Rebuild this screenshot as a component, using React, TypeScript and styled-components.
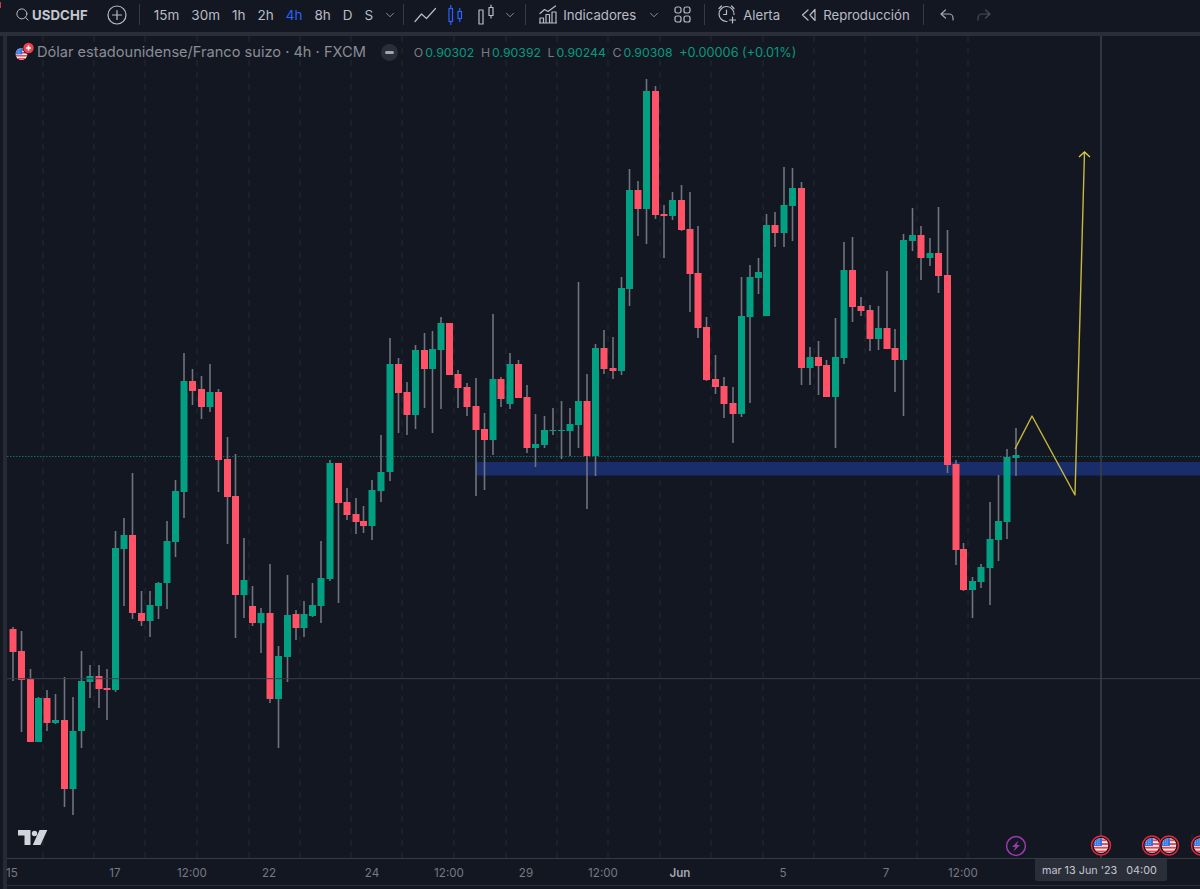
import { FC } from "react";
import styled, { createGlobalStyle } from "styled-components";
import { Search, ChevronDown } from "lucide-react";

const GlobalStyle = createGlobalStyle`
  html, body {
    margin: 0;
    padding: 0;
    background: #131722;
  }
  body {
    font-family: Inter, "Noto Sans", "Liberation Sans", sans-serif;
    overflow: hidden;
  }
`;

const GREEN = "#02a082";
const RED = "#ff5266";

// x, wick top, wick bottom, body top, body bottom, up
type Candle = [number, number, number, number, number, boolean];

const candles: Candle[] = [
  [13, 627, 681, 629, 652, false],
  [21.5, 631, 732, 651, 680, false],
  [30.5, 669, 742, 679, 742, false],
  [38.5, 697, 742, 698, 742, true],
  [47, 690, 731, 698, 723, false],
  [55.5, 694, 724, 720, 723, true],
  [64.5, 677, 807, 720, 789, false],
  [73, 697, 815, 731, 789, true],
  [81.5, 651, 748, 681, 731, true],
  [90, 665, 698, 676, 682, true],
  [99, 665, 708, 676, 689, false],
  [107, 669, 720, 688, 690, false],
  [115.5, 531, 692, 548, 690, true],
  [124, 518, 606, 535, 549, true],
  [132.5, 473, 619, 535, 613, false],
  [141.5, 591, 626, 613, 621, false],
  [150, 591, 637, 605, 621, true],
  [158.5, 582, 619, 583, 606, true],
  [167, 521, 609, 541, 583, true],
  [175.5, 480, 557, 491, 542, true],
  [184, 353, 518, 381, 492, true],
  [192.5, 369, 405, 381, 391, false],
  [201.5, 376, 419, 389, 407, false],
  [210, 364, 412, 392, 407, true],
  [218.5, 389, 492, 392, 460, false],
  [227.5, 437, 544, 459, 497, false],
  [235.5, 454, 638, 496, 595, false],
  [244, 538, 618, 580, 595, true],
  [252.5, 586, 626, 606, 623, false],
  [261, 608, 653, 613, 623, true],
  [270, 564, 703, 613, 699, false],
  [278.5, 646, 748, 656, 699, true],
  [287.5, 575, 682, 615, 657, true],
  [296, 610, 640, 614, 628, false],
  [304, 601, 637, 614, 628, true],
  [312.5, 583, 617, 605, 616, true],
  [321, 541, 623, 578, 606, true],
  [330, 460, 581, 463, 579, true],
  [338.5, 463, 603, 463, 503, false],
  [347, 488, 520, 502, 515, false],
  [356, 498, 534, 514, 522, false],
  [363.5, 506, 533, 521, 526, false],
  [372, 480, 540, 490, 526, true],
  [381, 435, 502, 472, 491, true],
  [390, 338, 481, 364, 472, true],
  [398.5, 358, 433, 364, 393, false],
  [407, 382, 435, 392, 415, false],
  [415.5, 345, 429, 350, 415, true],
  [424.5, 333, 408, 350, 369, false],
  [432.5, 331, 433, 349, 369, true],
  [441, 317, 409, 323, 350, true],
  [449.5, 323, 375, 323, 375, false],
  [458, 370, 408, 374, 388, false],
  [467, 383, 416, 387, 407, false],
  [476, 378, 496, 406, 430, false],
  [484.5, 413, 490, 429, 440, false],
  [493, 314, 455, 379, 440, true],
  [501, 377, 407, 379, 399, false],
  [510, 353, 409, 364, 404, true],
  [518.5, 360, 398, 364, 398, false],
  [527, 385, 453, 397, 448, false],
  [535.5, 414, 467, 444, 448, true],
  [544.5, 416, 448, 430, 445, true],
  [553, 408, 435, 430, 431, true],
  [561.5, 401, 459, 430, 431, true],
  [570, 408, 456, 424, 431, true],
  [578.5, 282, 448, 401, 425, true],
  [587, 374, 509, 401, 456, false],
  [595.5, 344, 476, 348, 456, true],
  [604, 330, 374, 348, 369, false],
  [613, 337, 379, 368, 371, false],
  [621.5, 277, 375, 288, 371, true],
  [629.5, 169, 306, 190, 289, true],
  [638, 181, 236, 190, 209, false],
  [646.5, 79, 244, 91, 209, true],
  [655.5, 86, 219, 91, 215, false],
  [664, 205, 258, 214, 216, false],
  [672.5, 192, 220, 200, 216, true],
  [681.5, 185, 231, 200, 230, false],
  [690, 192, 312, 229, 274, false],
  [698, 226, 338, 273, 328, false],
  [706.5, 317, 381, 327, 380, false],
  [715.5, 355, 394, 379, 387, false],
  [724, 377, 418, 386, 404, false],
  [733, 387, 443, 403, 414, false],
  [741.5, 277, 417, 316, 414, true],
  [750, 265, 403, 277, 317, true],
  [758.5, 258, 294, 272, 278, true],
  [766.5, 214, 316, 225, 316, true],
  [775, 212, 247, 225, 233, false],
  [784, 167, 247, 205, 233, true],
  [792.5, 168, 241, 188, 206, true],
  [801.5, 182, 385, 188, 368, false],
  [810, 347, 385, 357, 368, true],
  [818.5, 341, 395, 357, 366, false],
  [826.5, 360, 397, 365, 397, false],
  [835.5, 318, 448, 357, 397, true],
  [844, 242, 364, 270, 358, true],
  [852.5, 237, 322, 270, 307, false],
  [861, 297, 316, 306, 311, false],
  [870, 305, 351, 310, 339, false],
  [878.5, 306, 350, 328, 339, true],
  [887, 271, 349, 328, 349, false],
  [895, 329, 392, 348, 360, false],
  [903.5, 234, 416, 240, 360, true],
  [912.5, 208, 251, 235, 241, true],
  [921, 226, 280, 235, 258, false],
  [930, 238, 266, 253, 258, true],
  [938.5, 207, 293, 253, 276, false],
  [947.5, 230, 473, 275, 465, false],
  [956, 460, 565, 464, 550, false],
  [963.5, 543, 591, 549, 590, false],
  [972.5, 577, 618, 581, 590, true],
  [981, 564, 588, 567, 582, true],
  [990, 502, 605, 539, 568, true],
  [998.5, 475, 561, 521, 540, true],
  [1007, 449, 539, 457, 522, true],
  [1016, 428, 476, 455, 458, true],
];

const gridLines = [43, 94, 145, 197, 249, 300, 351, 402, 454, 506, 557, 608, 660, 711, 763, 814, 865, 917, 968];

const axisLabels: { x: number; text: string; strong?: boolean }[] = [
  { x: 12, text: "15" },
  { x: 115, text: "17" },
  { x: 192, text: "12:00" },
  { x: 269, text: "22" },
  { x: 372, text: "24" },
  { x: 449, text: "12:00" },
  { x: 526, text: "29" },
  { x: 603, text: "12:00" },
  { x: 680, text: "Jun", strong: true },
  { x: 783, text: "5" },
  { x: 886, text: "7" },
  { x: 963, text: "12:00" },
];

const intervals = ["15m", "30m", "1h", "2h", "4h", "8h", "D", "S"];

const Page = styled.div`
  width: 1200px;
  height: 889px;
  display: flex;
  flex-direction: column;
  background: #131722;
  overflow: hidden;
`;

const Toolbar = styled.div`
  height: 32px;
  flex: none;
  display: flex;
  align-items: center;
  padding: 0 0 3px 15px;
  color: #b9bcc5;
  font-size: 13.2px;
  box-sizing: border-box;
  position: relative;
  &::before {
    content: "";
    position: absolute;
    left: 0;
    top: 2px;
    width: 1px;
    height: 6px;
    background: #c73a48;
  }
`;

const Symbol = styled.span`
  margin-left: 2px;
  font-weight: 700;
  font-size: 13.2px;
  letter-spacing: 0.1px;
  color: #c4c7cf;
`;

const Divider = styled.div<{ $left: number; $right: number }>`
  width: 1px;
  height: 21px;
  flex: none;
  background: #363a45;
  margin-left: ${(p) => p.$left}px;
  margin-right: ${(p) => p.$right}px;
`;

const Intervals = styled.div`
  display: flex;
  gap: 12px;
  font-size: 13.5px;
`;

const Interval = styled.span<{ $active?: boolean }>`
  color: ${(p) => (p.$active ? "#2962ff" : "#b9bcc5")};
`;

const ToolIcon = styled.svg<{ $left?: number }>`
  display: block;
  flex: none;
  margin-left: ${(p) => p.$left ?? 0}px;
`;

const Chevron = styled(ChevronDown)<{ $left: number }>`
  flex: none;
  margin-left: ${(p) => p.$left}px;
  color: #a3a6af;
`;

const ToolLabel = styled.span<{ $left: number }>`
  margin-left: ${(p) => p.$left}px;
`;

const Gutter = styled.div`
  height: 4px;
  flex: none;
  background: #2a2e39;
`;

const Workspace = styled.div`
  flex: 1;
  display: flex;
  min-height: 0;
`;

const SideEdge = styled.div`
  width: 4px;
  margin-left: 3px;
  flex: none;
  background: #262a34;
`;

const Main = styled.div`
  flex: 1;
  display: flex;
  flex-direction: column;
  min-width: 0;
  position: relative;
`;

const Chart = styled.svg`
  display: block;
  flex: none;
  width: 1193px;
  height: 822px;
  border-bottom: 1px solid #363a45;
  box-sizing: content-box;
`;

const Legend = styled.div`
  position: absolute;
  left: 8px;
  top: 6px;
  display: flex;
  align-items: center;
  height: 20px;
`;

const LegendTitle = styled.span`
  margin-left: 3px;
  font-size: 14.6px;
  color: #8a8d96;
  white-space: nowrap;
`;

const CollapseButton = styled.span`
  width: 17px;
  height: 17px;
  margin-left: 15px;
  border-radius: 50%;
  background: #2a2e39;
  display: flex;
  align-items: center;
  justify-content: center;
  &::before {
    content: "";
    width: 9px;
    height: 3px;
    border-radius: 2px;
    background: #a3a6af;
  }
`;

const Values = styled.div`
  display: flex;
  margin-left: 16px;
  font-size: 12.3px;
  white-space: nowrap;
`;

const ValueKey = styled.span`
  color: #787b86;
  margin-right: 2px;
`;

const ValueNum = styled.span`
  color: #089981;
  margin-right: 6.5px;
`;

const ChangeValue = styled(ValueNum)`
  font-size: 12.7px;
`;

const TimeAxis = styled.div`
  height: 26px;
  flex: none;
  position: relative;
  border-bottom: 1px solid #2a2e39;
`;

const AxisLabel = styled.span<{ $strong?: boolean }>`
  position: absolute;
  top: 7px;
  transform: translateX(-50%);
  font-size: 11.6px;
  line-height: 14px;
  font-weight: ${(p) => (p.$strong ? 600 : 400)};
  color: ${(p) => (p.$strong ? "#a3a6af" : "#767983")};
`;

const TimeTip = styled.div`
  position: absolute;
  left: 1028px;
  top: 0;
  width: 125px;
  height: 22px;
  padding-left: 7px;
  background: #2a2e39;
  border-radius: 0 0 2px 2px;
  color: #c4c7cf;
  font-size: 10.8px;
  line-height: 24px;
  white-space: pre;
`;

const IconStroke = {
  fill: "none",
  stroke: "currentColor",
  strokeWidth: 1.2,
  strokeLinecap: "round" as const,
  strokeLinejoin: "round" as const,
};

const PlusCircle: FC = () => (
  <ToolIcon $left={19} width="20" height="20" viewBox="0 0 20 20" {...IconStroke}>
    <circle cx="10" cy="10" r="9" />
    <path d="M10 5.5v9M5.5 10h9" />
  </ToolIcon>
);

const LineIcon: FC = () => (
  <ToolIcon width="22" height="16" viewBox="0 0 22 16" {...IconStroke}>
    <path d="M1 14.5 7.5 7l5 4.5L21.5 1.5" />
  </ToolIcon>
);

const CandleIcon: FC = () => (
  <ToolIcon $left={12} width="15" height="22" viewBox="0 0 15 22" fill="none" stroke="#2962ff" strokeWidth={1.2}>
    <rect x="1" y="4.5" width="3.5" height="13" />
    <path d="M2.75 1v3.5M2.75 17.5V21" />
    <rect x="10" y="7.5" width="3.5" height="7" />
    <path d="M11.75 4v3.5M11.75 14.5V18" />
  </ToolIcon>
);

const HollowIcon: FC = () => (
  <ToolIcon $left={15} width="17" height="22" viewBox="0 0 17 22" {...IconStroke}>
    <rect x="1" y="6" width="4" height="14" />
    <rect x="11" y="3.5" width="4" height="8" />
    <path d="M13 1v2.5M13 11.5V14" />
  </ToolIcon>
);

const IndicatorsIcon: FC = () => (
  <ToolIcon width="18" height="19" viewBox="0 0 18 19" {...IconStroke}>
    <path d="M1 8.5 5.5 4.5 9 6.5 16.5 1" />
    <path d="M1 18v-5h3.5v5M7 18V9.5h3.5V18M13 18V7h4v11M0.5 18h17" />
  </ToolIcon>
);

const LayoutIcon: FC = () => (
  <ToolIcon $left={13} width="17" height="17" viewBox="0 0 17 17" {...IconStroke}>
    <rect x="1" y="1" width="6" height="6" rx="2" />
    <rect x="10" y="1" width="6" height="6" rx="2" />
    <rect x="1" y="10" width="6" height="6" rx="2" />
    <rect x="10" y="10" width="6" height="6" rx="2" />
  </ToolIcon>
);

const AlarmIcon: FC = () => (
  <ToolIcon width="19" height="19" viewBox="0 0 19 19" {...IconStroke}>
    <path d="M16 9.5A7.5 7.5 0 1 0 9 16.5" />
    <path d="M8.5 5v4.5H5.5M1 3.5 3.5 1M16 3.5 13.5 1M14.5 12v6M11.5 15h6" />
  </ToolIcon>
);

const ReplayIcon: FC = () => (
  <ToolIcon $left={21} width="17" height="14" viewBox="0 0 17 14" {...IconStroke}>
    <path d="M7 2 1.5 7 7 12M14 1.5v11L9 7z" />
  </ToolIcon>
);

const UndoIcon: FC<{ $left: number; $dim?: boolean }> = ({ $left, $dim }) => (
  <ToolIcon
    $left={$left}
    width="14"
    height="12"
    viewBox="0 0 14 12"
    {...IconStroke}
    stroke={$dim ? "#4a4e59" : "#a3a6af"}
    transform={$dim ? "scale(-1 1)" : undefined}
  >
    <path d="M5.5 1 1 5l4.5 4M1 5h8a4 4 0 0 1 4 4v2" />
  </ToolIcon>
);

const UsFlag: FC<{ id: string; r: number; cx: number; cy: number }> = ({ id, r, cx, cy }) => {
  const stripes = [0, 1, 2, 3];
  return (
    <g transform={`translate(${cx - r} ${cy - r}) scale(${r / 8})`}>
      <clipPath id={id}>
        <circle cx="8" cy="8" r="8" />
      </clipPath>
      <g clipPath={`url(#${id})`}>
        <rect width="16" height="16" fill="#f1f2f4" />
        {stripes.map((s) => (
          <rect key={s} y={s * 4 + 1.4} width="16" height="2" fill="#f0404f" />
        ))}
        <rect width="9" height="8.5" fill="#2f6fe0" />
        <path d="M1.5 2h6M1.5 4.3h6M1.5 6.6h6" stroke="#dbe6fb" strokeWidth="0.9" strokeDasharray="1 1" />
      </g>
    </g>
  );
};

const EventFlag: FC<{ x: number }> = ({ x }) => (
  <g>
    <circle cx={x} cy="845.5" r="9.5" fill="#131722" stroke="#f0253a" strokeWidth="1.4" />
    <UsFlag id={`event-${x}`} r={7.4} cx={x} cy={845.5} />
  </g>
);

const PairFlags: FC = () => (
  <ToolIcon width="19" height="20" viewBox="0 0 19 20">
    <UsFlag id="legend-us" r={6} cx={6.5} cy={12} />
    <circle cx="13.5" cy="6" r="6" fill="#131722" />
    <circle cx="13.5" cy="6" r="5.2" fill="#f0404f" />
    <path d="M13.5 3.5v5M11 6h5" stroke="#fff" strokeWidth="1.6" />
  </ToolIcon>
);

const CandleMark: FC<{ candle: Candle }> = ({ candle }) => {
  const [x, wickTop, wickBottom, bodyTop, bodyBottom, up] = candle;
  return (
    <g>
      <line x1={x} x2={x} y1={wickTop} y2={wickBottom} stroke="#70747f" strokeWidth="1.6" />
      <rect
        x={x - 3.5}
        y={bodyTop}
        width="7"
        height={bodyBottom - bodyTop}
        fill={up ? GREEN : RED}
      />
    </g>
  );
};

const App: FC = () => {
  return (
    <Page>
      <GlobalStyle />
      <Toolbar>
        <Search size={15} strokeWidth={1.6} />
        <Symbol>USDCHF</Symbol>
        <PlusCircle />
        <Divider $left={12} $right={14} />
        <Intervals>
          {intervals.map((item) => (
            <Interval key={item} $active={item === "4h"}>
              {item}
            </Interval>
          ))}
        </Intervals>
        <Chevron size={14} strokeWidth={1.4} $left={10} />
        <Divider $left={6} $right={10} />
        <LineIcon />
        <CandleIcon />
        <HollowIcon />
        <Chevron size={14} strokeWidth={1.4} $left={8} />
        <Divider $left={8} $right={13} />
        <IndicatorsIcon />
        <ToolLabel $left={6}>Indicadores</ToolLabel>
        <Chevron size={14} strokeWidth={1.4} $left={11} />
        <LayoutIcon />
        <Divider $left={13} $right={13} />
        <AlarmIcon />
        <ToolLabel $left={6}>Alerta</ToolLabel>
        <ReplayIcon />
        <ToolLabel $left={5}>Reproducción</ToolLabel>
        <Divider $left={13} $right={16} />
        <UndoIcon $left={0} />
        <UndoIcon $left={23} $dim />
      </Toolbar>
      <Gutter />
      <Workspace>
        <SideEdge />
        <Main>
          <Chart viewBox="7 36 1193 822">
            {gridLines.map((x) => (
              <line key={x} x1={x} x2={x} y1="36" y2="858" stroke="#262a34" strokeDasharray="6 6" />
            ))}
            <line x1="1192" x2="1192" y1="834" y2="858" stroke="#262a34" strokeDasharray="6 6" />
            <rect x="476" y="462" width="724" height="13.5" fill="#1a2d6b" />
            <line x1="7" x2="1200" y1="456.5" y2="456.5" stroke="#0c6f63" strokeDasharray="1.5 1.5" />
            {candles.map((c) => (
              <CandleMark key={c[0]} candle={c} />
            ))}
            <line x1="1101" x2="1101" y1="36" y2="858" stroke="#3a3e4a" strokeWidth="1.6" />
            <line x1="7" x2="1200" y1="678.7" y2="678.7" stroke="#3a3e4a" strokeWidth="1" />
            <polyline
              points="1015,449 1032,416 1075,495 1084.5,152"
              fill="none"
              stroke="#c9b93b"
              strokeWidth="1.4"
              strokeLinejoin="round"
            />
            <path d="M1079 157 1084.5 152 1090 157" fill="none" stroke="#e0cd48" strokeWidth="1.3" />
            <g fill="#d1d4dc">
              <path d="M18 830h12.5v15h-6v-9.5H18z" />
              <circle cx="34.5" cy="833.5" r="2.7" />
              <path d="M39.5 830H47.3L40.5 845H32.8z" />
            </g>
            <g>
              <circle cx="1016" cy="846" r="9.4" fill="#131722" stroke="#9c39ad" strokeWidth="1.5" />
              <path d="M1018.5 840.5 1012 847h3.4l-2 4.5 6.6-6.5h-3.4z" fill="#9c39ad" />
            </g>
            <EventFlag x={1101} />
            <EventFlag x={1152} />
            <EventFlag x={1169} />
            <EventFlag x={1201} />
          </Chart>
          <Legend>
            <PairFlags />
            <LegendTitle>Dólar estadounidense/Franco suizo · 4h · FXCM</LegendTitle>
            <CollapseButton />
            <Values>
              <ValueKey>O</ValueKey>
              <ValueNum>0.90302</ValueNum>
              <ValueKey>H</ValueKey>
              <ValueNum>0.90392</ValueNum>
              <ValueKey>L</ValueKey>
              <ValueNum>0.90244</ValueNum>
              <ValueKey>C</ValueKey>
              <ValueNum>0.90308</ValueNum>
              <ChangeValue>+0.00006 (+0.01%)</ChangeValue>
            </Values>
          </Legend>
          <TimeAxis>
            {axisLabels.map((label) => (
              <AxisLabel key={label.x} $strong={label.strong} style={{ left: label.x - 7 }}>
                {label.text}
              </AxisLabel>
            ))}
            <TimeTip>{"mar 13 Jun '23   04:00"}</TimeTip>
          </TimeAxis>
        </Main>
      </Workspace>
    </Page>
  );
};

export default App;
